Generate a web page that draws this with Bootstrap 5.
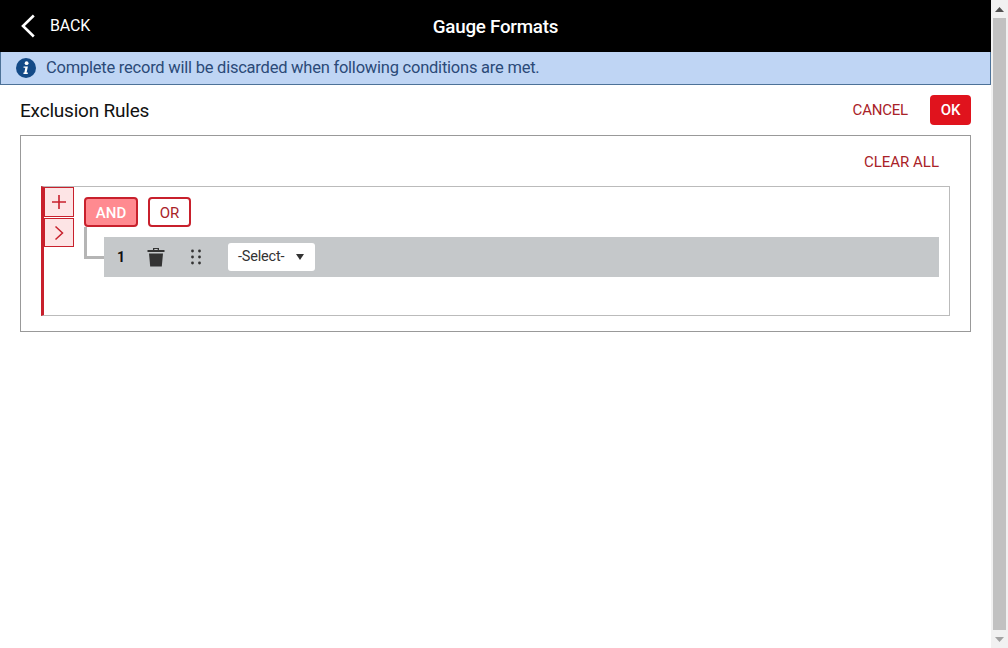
<!DOCTYPE html>
<html lang="en">
<head>
<meta charset="utf-8">
<title>Gauge Formats</title>
<link href="https://cdn.jsdelivr.net/npm/bootstrap@5.3.0/dist/css/bootstrap.min.css" rel="stylesheet">
<style>
html,body{height:100%;overflow:hidden}
body{font-family:Roboto,"Liberation Sans",sans-serif;color:#111;background:#fff}
.shell{height:648px}
.pagecol{width:991px}
.topbar{height:52px;background:#000;color:#fff;display:grid;grid-template-columns:1fr auto 1fr}
.backlink{color:#fff;font-size:16px;letter-spacing:-.2px;text-decoration:none;padding:0 0 0 21px;gap:15px}
.toptitle{font-size:18.8px;letter-spacing:-.25px;font-weight:500;padding-top:3px}
.infobar{height:33px;background:#bfd5f4;border:1px solid #4d7298;border-top:0;color:#2b4a78;font-size:16.5px;letter-spacing:-.23px;padding-left:15px;gap:10px}
.infobar span{padding-top:1px}
.headrow{padding:0 20px 0;height:50px}
.pagehead{font-size:19px;letter-spacing:-.2px;margin:0;font-weight:400;color:#111;padding-top:2px}
.txtbtn{color:#a92228;font-size:15px;letter-spacing:-.2px;padding:0;border:0;background:none;line-height:1}
.okbtn{background:#e0131d;color:#fff;font-size:15px;letter-spacing:-.2px;font-weight:500;border:0;width:41px;height:30px;border-radius:4px;padding:1px 0 0;margin-left:22px}
.outerbox{margin:0 20px;height:197px;border:1px solid #999;padding:16px 20px 15px}
.clearrow{height:34px;padding:3px 11px 0 0}
.clearrow .txtbtn{letter-spacing:0}
.rulebox{height:130px;border:1px solid #bbb;border-left:3px solid #c8202c;gap:10px}
.sidebtns{width:30px;gap:1px;padding-top:0}
.sidebtn{width:30px;height:30px;background:#fde4e5;border:1px solid #c8202c;padding:0;border-radius:0;display:flex;align-items:center;justify-content:center}
.sidebtn+.sidebtn{height:29px}
.rulemain{padding:10px 10px 0 0}
.opbtn{height:30px;border:2px solid #c8202c;border-radius:4px;font-size:15px;padding:3px 0 0;line-height:1;background:#fff;color:#a92228}
.opand{width:54px;background:#ff8a90;color:#fff;font-weight:500}
.opor{width:43px;margin-left:10px}
.ruletree{height:50px}
.connector{width:20px;height:32px;border-left:3px solid #b5b5b5;border-bottom:3px solid #b5b5b5}
.ruleline{height:40px;background:#c5c8ca;margin-top:10px;padding-left:13px}
.rulenum{font-size:14px;font-weight:700;width:30px}
.icoslot{width:41px}
.icodrag{padding-left:3px;width:40px}
.selbox{width:87px;height:28px;background:#fff;border-radius:3px;font-size:14.5px;letter-spacing:-.2px;color:#333;padding:0 11px 0 10px}
.scrolltrack{width:17px;background:#f1f1f1;padding-left:2px;padding-right:2px}
.scrollthumb{background:#c1c1c1;width:13px}
.scrollcap{height:18px}
</style>
</head>
<body>
<div class="shell d-flex">
  <div class="pagecol d-flex flex-column">
    <header class="topbar align-items-center">
      <a href="#" class="backlink d-flex align-items-center">
        <svg width="14" height="24" viewBox="0 0 14 24" fill="none" stroke="#fff" stroke-width="2.6" aria-hidden="true"><path d="M12.8 1.5 2 12l10.8 10.5"/></svg>
        <span>BACK</span>
      </a>
      <div class="toptitle">Gauge Formats</div>
      <div></div>
    </header>
    <div class="infobar d-flex align-items-center">
      <svg width="20" height="20" viewBox="0 0 20 20" aria-hidden="true"><circle cx="10" cy="10" r="10" fill="#134a87"/><circle cx="10.6" cy="5.2" r="1.9" fill="#fff"/><path d="M7.6 8.4h4.3l-1.3 6.2h1.2v1.4H7.4l.1-1.4h.9l.9-4.8H7.5z" fill="#fff"/></svg>
      <span>Complete record will be discarded when following conditions are met.</span>
    </div>
    <div class="headrow d-flex justify-content-between align-items-center">
      <h1 class="pagehead">Exclusion Rules</h1>
      <div class="d-flex align-items-center">
        <button type="button" class="txtbtn">CANCEL</button>
        <button type="button" class="okbtn">OK</button>
      </div>
    </div>
    <section class="outerbox">
      <div class="clearrow d-flex justify-content-end"><button type="button" class="txtbtn align-self-start">CLEAR ALL</button></div>
      <div class="rulebox d-flex">
        <div class="sidebtns d-flex flex-column">
          <button type="button" class="sidebtn" aria-label="Add"><svg width="16" height="16" viewBox="0 0 16 16" stroke="#c8202c" stroke-width="1.6" aria-hidden="true"><path d="M8 1v14M1 8h14"/></svg></button>
          <button type="button" class="sidebtn" aria-label="Expand"><svg width="10" height="16" viewBox="0 0 10 16" fill="none" stroke="#c8202c" stroke-width="1.5" aria-hidden="true"><path d="M1.5 1.5 8.5 8l-7 6.5"/></svg></button>
        </div>
        <div class="rulemain flex-grow-1">
          <div class="d-flex">
            <button type="button" class="opbtn opand">AND</button>
            <button type="button" class="opbtn opor">OR</button>
          </div>
          <div class="ruletree d-flex">
            <div class="connector"></div>
            <div class="ruleline flex-grow-1 d-flex align-items-center">
              <span class="rulenum">1</span>
              <span class="icoslot d-flex">
                <svg width="18" height="20" viewBox="0 0 18 20" fill="#333" aria-hidden="true"><path d="M6 1h6v2h5.5v2H.5V3H6zM7.3 2v1h3.4V2z" fill-rule="evenodd"/><path d="M2 6.5h14L14.8 19.5H3.2z"/></svg>
              </span>
              <span class="icoslot icodrag d-flex">
                <svg width="10" height="16" viewBox="0 0 10 16" fill="#333" aria-hidden="true"><circle cx="1.5" cy="2" r="1.4"/><circle cx="8.5" cy="2" r="1.4"/><circle cx="1.5" cy="8" r="1.4"/><circle cx="8.5" cy="8" r="1.4"/><circle cx="1.5" cy="14" r="1.4"/><circle cx="8.5" cy="14" r="1.4"/></svg>
              </span>
              <div class="selbox d-flex align-items-center justify-content-between">
                <span>-Select-</span>
                <svg width="8" height="6" viewBox="0 0 8 6" fill="#333" aria-hidden="true"><path d="M0 0h8L4 6z"/></svg>
              </div>
            </div>
          </div>
        </div>
      </div>
    </section>
  </div>
  <div class="scrolltrack d-flex flex-column">
    <div class="scrollcap d-flex align-items-center justify-content-center"><svg width="9" height="5" viewBox="0 0 9 5" fill="#505050" aria-hidden="true"><path d="M4.5 0 9 5H0z"/></svg></div>
    <div class="scrollthumb flex-grow-1"></div>
    <div class="scrollcap d-flex align-items-center justify-content-center"><svg width="9" height="5" viewBox="0 0 9 5" fill="#a3a3a3" aria-hidden="true"><path d="M0 0h9L4.5 5z"/></svg></div>
  </div>
</div>
<script src="https://cdn.jsdelivr.net/npm/bootstrap@5.3.0/dist/js/bootstrap.bundle.min.js"></script>
</body>
</html>
